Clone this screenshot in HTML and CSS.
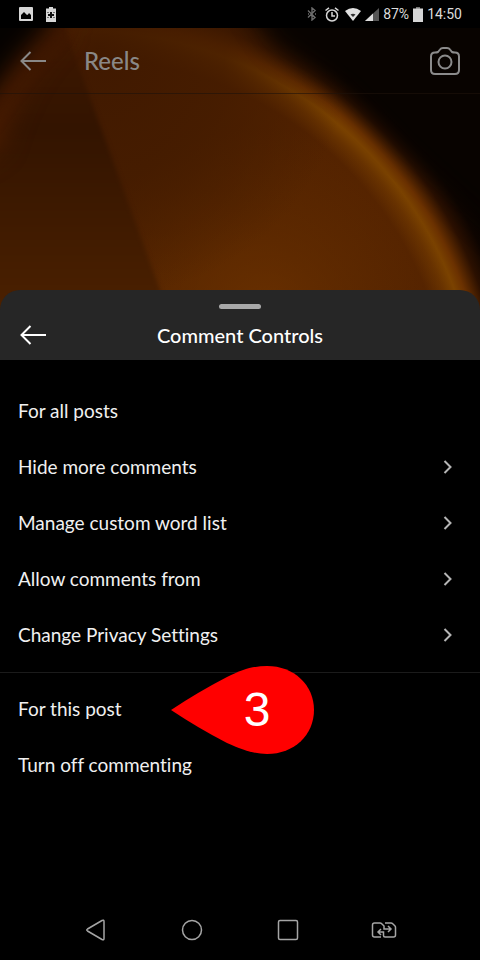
FILE: index.html
```html
<!DOCTYPE html>
<html lang="en">
<head>
<meta charset="utf-8">
<meta name="viewport" content="width=device-width, initial-scale=1">
<title>Comment Controls</title>
<link rel="stylesheet" href="styles.css">
</head>
<body>
<div class="status">
  <div class="status-group status-left">
    <svg width="14" height="14" viewBox="0 0 14 14" aria-hidden="true"><path fill="#d6d6d6" fill-rule="evenodd" d="M1 0h12q1 0 1 1v12q0 1-1 1H1q-1 0-1-1V1q0-1 1-1zM2 12h10V8l-2-2-1 1.500L8 8 5 5 2 8z"/></svg>
    <svg width="10" height="15" viewBox="0 0 10 15" aria-hidden="true"><path fill="#d6d6d6" d="M3 0h4v1.500h3V15H0V1.500h3z"/><path d="M5 5v6M2 8h6" stroke="#111" stroke-width="2"/><path d="M2 5v1M8 5v1M2 10v1M8 10v1" stroke="#111"/></svg>
  </div>
  <div class="status-group">
    <svg class="bluetooth" width="10" height="14" viewBox="0 0 10 14" aria-hidden="true"><path d="M1 3.500l7 7L5 13V1l3 2.500-7 7M1 7h1M8 7h1" fill="none" stroke="#6c6c6c" stroke-width="1.400"/></svg>
    <svg class="alarm" width="14" height="15" viewBox="0 0 14 15" aria-hidden="true"><g fill="none" stroke="#d6d6d6" stroke-width="1.500"><circle cx="7" cy="8.500" r="5.500"/><path d="M7 5v4h3M.5 3.500L4 .8M10 .8l3.500 2.700"/></g></svg>
    <svg width="16" height="13" viewBox="0 0 16 13" aria-hidden="true"><path fill="#e2e2e2" d="M0 3Q8-3 16 3L8 13z"/><path d="M5.500 6.500Q8 5 10.500 6.500L8 9z" fill="#333"/></svg>
    <svg width="14" height="13" viewBox="0 0 14 13" aria-hidden="true"><path fill="#555" d="M14 0v13H0z"/><path fill="#dedede" d="M8 5.600V13H0z"/></svg>
    <span>87%</span>
    <svg width="10" height="15" viewBox="0 0 10 15" aria-hidden="true"><path fill="#777" d="M3 0h4v2H3z"/><path fill="#d6d6d6" d="M0 1.500h10V15H0z"/></svg>
    <span class="clock">14:50</span>
  </div>
</div>
<main class="screen">
  <div class="reel">
    <svg class="backdrop" viewBox="0 0 480 290" preserveAspectRatio="none" aria-hidden="true">
      <defs>
        <radialGradient id="disc" gradientUnits="userSpaceOnUse" cx="83" cy="399" r="450">
          <stop offset="0" stop-color="#542500"/><stop offset=".6" stop-color="#4d2000"/><stop offset=".82" stop-color="#522200"/><stop offset=".855" stop-color="#673200"/><stop offset=".88" stop-color="#7a4200"/><stop offset=".9" stop-color="#6b3100"/><stop offset=".935" stop-color="#2b1000"/><stop offset=".97" stop-color="#0e0500"/><stop offset="1" stop-color="#080300"/>
        </radialGradient>
        <radialGradient id="glow" gradientUnits="userSpaceOnUse" cx="265" cy="290" r="190"><stop offset="0" stop-color="#743600" stop-opacity=".7"/><stop offset="1" stop-color="#743600" stop-opacity="0"/></radialGradient>
        <radialGradient id="shade" gradientUnits="userSpaceOnUse" cx="100" cy="20" r="250"><stop offset="0" stop-color="#3e1800" stop-opacity=".92"/><stop offset=".5" stop-color="#431b00" stop-opacity=".8"/><stop offset="1" stop-color="#431b00" stop-opacity="0"/></radialGradient>
        <linearGradient id="wedge" gradientUnits="userSpaceOnUse" x1="0" y1="0" x2="0" y2="290"><stop offset="0" stop-color="#3e1800"/><stop offset=".35" stop-color="#331400"/><stop offset="1" stop-color="#4c2100"/></linearGradient>
        <filter id="soft" filterUnits="userSpaceOnUse" x="-150" y="-150" width="800" height="700" color-interpolation-filters="sRGB"><feGaussianBlur stdDeviation="12"/></filter>
        <filter id="edge" filterUnits="userSpaceOnUse" x="-150" y="-150" width="800" height="700" color-interpolation-filters="sRGB"><feGaussianBlur stdDeviation="2"/></filter>
      </defs>
      <path fill="url(#disc)" d="M0 0h480v290H0z"/>
      <path fill="url(#glow)" d="M0 0h480v290H0z"/>
      <path fill="url(#shade)" d="M0 0h480v290H0z"/>
      <path d="M240-40L275 15 345 58 405 120 540 240V-40z" fill="#080300" filter="url(#soft)"/>
      <path d="M60-20L72 20L160 262L180 320H-50V-20z" fill="url(#wedge)" filter="url(#edge)"/>
      <path d="M-50 150L0 120Q20 45 64 5V-40H-50z" fill="#4a1c00" filter="url(#soft)"/>
      <path d="M-60-60H72L48 0Q15 30-25 90H-60z" fill="#050200" filter="url(#soft)"/>
    </svg>
    <header class="appbar">
      <button class="icon-button" type="button" aria-label="Back"><svg width="26" height="20" viewBox="0 0 26 20"><path d="M10.500 1L1.500 10l9 9M2 10h24" fill="none" stroke="#898887" stroke-width="2"/></svg></button>
      <h1>Reels</h1>
      <button class="icon-button" type="button" aria-label="Camera"><svg width="30" height="28" viewBox="0 0 30 28"><g fill="none" stroke="#8b8b8b" stroke-width="2"><path d="M8 5L10 2.500Q11 1 13 1h4q2 0 3 1.500L22 5q1 .5 3 .5 4 0 4 4V23q0 4-4 4H5q-4 0-4-4V9.500q0-4 4-4 2 0 3-.5z"/><circle cx="15" cy="15" r="6.500"/></g></svg></button>
    </header>
  </div>
  <section class="sheet" aria-labelledby="sheet-title">
    <header class="sheet-head">
      <div class="handle"></div>
      <div class="sheet-bar">
        <button class="icon-button" type="button" aria-label="Back"><svg width="26" height="20" viewBox="0 0 26 20"><path d="M10.500 1L1.500 10l9 9M2 10h24" fill="none" stroke="#fff" stroke-width="2"/></svg></button>
        <h2 id="sheet-title">Comment Controls</h2>
      </div>
    </header>
    <div class="group">
      <h3 class="row">For all posts</h3>
      <button class="row" type="button">Hide more comments<svg width="10" height="14" viewBox="0 0 10 14"><path d="M1.500 1l6 6-6 6"/></svg></button>
      <button class="row" type="button">Manage custom word list<svg width="10" height="14" viewBox="0 0 10 14"><path d="M1.500 1l6 6-6 6"/></svg></button>
      <button class="row" type="button">Allow comments from<svg width="10" height="14" viewBox="0 0 10 14"><path d="M1.500 1l6 6-6 6"/></svg></button>
      <button class="row" type="button">Change Privacy Settings<svg width="10" height="14" viewBox="0 0 10 14"><path d="M1.500 1l6 6-6 6"/></svg></button>
    </div>
    <div class="group group-post">
      <h3 class="row">For this post</h3>
      <button class="row" type="button">Turn off commenting</button>
      <div class="marker">
        <svg width="143" height="88" viewBox="0 0 143 88" aria-hidden="true"><path fill="#f00" d="M0 44Q27 26 56 11C72 3 83 0 96 0C123 0 143 19 143 44S123 88 96 88C83 88 72 84 56 77Q27 62 0 44z"/></svg>
        <span>3</span>
      </div>
    </div>
  </section>
</main>
<nav class="system-nav" aria-label="System">
  <button type="button" aria-label="Back"><svg width="26" height="24" viewBox="0 0 26 24"><path d="M19 2.500q2-1 2 1v17q0 2-2 1L4.500 13q-1.500-1 0-2z"/></svg></button>
  <button type="button" aria-label="Home"><svg width="26" height="24" viewBox="0 0 26 24"><circle cx="13" cy="12" r="9.500"/></svg></button>
  <button type="button" aria-label="Recent apps"><svg width="26" height="24" viewBox="0 0 26 24"><rect x="3.500" y="2.500" width="19" height="19" rx="1.500"/></svg></button>
  <button type="button" aria-label="Switch app"><svg width="26" height="24" viewBox="0 0 26 24"><path d="M10 19H3.500Q1.500 19 1.500 17V7q0-2 2-2H9q1 0 2 1l2 2v3h6M17 8l3 3-3 3M14 5h6q1 0 2 1l2 2q.5.500.5 1.500V17q0 2-2 2H14q-1.500 0-1.500-1.500V14H7M10 11l-3 3 3 3"/></svg></button>
</nav>
</body>
</html>
```
FILE: styles.css
```css
* { box-sizing: border-box; }
body {
  margin: 0;
  min-height: 100vh;
  display: flex;
  flex-direction: column;
  background: #000;
  color: #f0f0f0;
  font-family: Lato, "Open Sans", sans-serif;
  font-variant-ligatures: none;
}
button {
  border: 0;
  padding: 0;
  background: none;
  color: inherit;
  font: inherit;
  font-variant-ligatures: none;
  text-align: left;
  cursor: pointer;
}
svg { display: block; flex: none; }
h1, h2, h3 { margin: 0; font-weight: 500; }
.status {
  height: 28px;
  padding: 0 18px 0 19px;
  display: flex;
  align-items: center;
  justify-content: space-between;
  color: #dcdcdc;
  font: 14px/28px Roboto, "Open Sans", sans-serif;
}
.status-group { display: flex; align-items: center; gap: 4px; }
.status-left { gap: 13px; }
.bluetooth { margin-right: 4px; }
.alarm { margin-right: 2px; }
.screen { flex: 1; }
.reel { position: relative; height: 290px; margin-bottom: -28px; }
.backdrop { position: absolute; inset: 0; width: 100%; height: 100%; }
.appbar {
  position: relative;
  height: 66px;
  padding: 0 20px;
  display: flex;
  align-items: center;
  border-bottom: 1px solid rgba(30, 18, 10, .6);
}
.appbar h1 {
  flex: 1;
  margin-left: 38px;
  color: #898887;
  font-size: 24px;
  line-height: 32px;
}
.sheet { position: relative; }
.sheet-head {
  height: 70px;
  padding-top: 14px;
  background: #262626;
  border-radius: 20px 20px 0 0;
}
.handle {
  width: 42px;
  height: 5px;
  margin: 0 auto;
  border-radius: 3px;
  background: #a9a9a9;
}
.sheet-bar {
  height: 52px;
  padding: 0 20px;
  display: grid;
  grid-template-columns: 26px 1fr 26px;
  align-items: center;
}
.sheet-bar h2 {
  color: #fff;
  font-size: 20px;
  line-height: 28px;
  text-align: center;
}
.group { padding-top: 23px; }
.group-post {
  position: relative;
  margin-top: 9px;
  padding-top: 8px;
  border-top: 1px solid #1b1b1b;
}
.row {
  width: 100%;
  height: 56px;
  padding: 0 27px 0 18px;
  display: flex;
  align-items: center;
  justify-content: space-between;
  font-size: 19px;
  font-weight: 400;
  line-height: 24px;
}
.row path { fill: none; stroke: #b5b5b5; stroke-width: 2; }
.marker { position: absolute; left: 171px; top: -7px; }
.marker span {
  position: absolute;
  inset: 0;
  padding-left: 29px;
  color: #fff;
  font: 48px/88px "Liberation Sans", sans-serif;
  text-align: center;
}
.system-nav {
  height: 60px;
  padding: 0 10%;
  display: grid;
  grid-template-columns: repeat(4, 1fr);
}
.system-nav button { display: grid; place-items: center; }
.system-nav path, .system-nav circle, .system-nav rect {
  fill: none;
  stroke: #a5a5a5;
  stroke-width: 1.5;
}
```
